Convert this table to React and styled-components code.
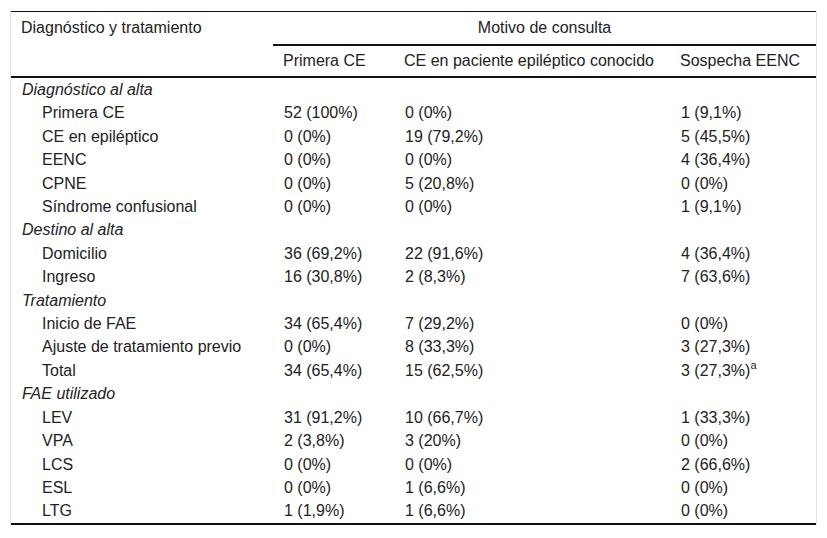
import React from 'react';
import styled, { createGlobalStyle } from 'styled-components';

const GlobalStyle = createGlobalStyle`
  html, body {
    margin: 0;
    padding: 0;
    background: #fff;
  }
`;

const Page = styled.div`
  padding: 11px 0 0 10px;
  font-family: "Liberation Sans", Arial, sans-serif;
  font-size: 16px;
  color: #222;
`;

const Frame = styled.div`
  width: 805px;
  border-left: 1px solid #e2e2e2;
  border-right: 1px solid #e2e2e2;
`;

const Table = styled.table`
  width: 805px;
  border-collapse: collapse;
  table-layout: fixed;
  border-top: 1px solid #111;
  border-bottom: 2px solid #111;
`;

const HeadCell = styled.th`
  font-weight: normal;
  text-align: ${(p) => (p.$center ? 'center' : 'left')};
  vertical-align: top;
  padding: 0 10px;
  height: ${(p) => p.$h}px;
  line-height: ${(p) => p.$lh}px;
  border-bottom: ${(p) => (p.$line ? '2px solid #111' : 'none')};
  white-space: nowrap;
`;

const Cell = styled.td`
  padding: 0 10px 0 ${(p) => (p.$indent ? 31 : 11)}px;
  height: 23.4px;
  line-height: 23.4px;
  font-style: ${(p) => (p.$italic ? 'italic' : 'normal')};
  white-space: nowrap;
  vertical-align: top;
`;

const Sup = styled.sup`
  font-size: 11px;
  line-height: 0;
  vertical-align: 7px;
`;

const groups = [
  {
    title: 'Diagnóstico al alta',
    rows: [
      ['Primera CE', '52 (100%)', '0 (0%)', '1 (9,1%)'],
      ['CE en epiléptico', '0 (0%)', '19 (79,2%)', '5 (45,5%)'],
      ['EENC', '0 (0%)', '0 (0%)', '4 (36,4%)'],
      ['CPNE', '0 (0%)', '5 (20,8%)', '0 (0%)'],
      ['Síndrome confusional', '0 (0%)', '0 (0%)', '1 (9,1%)'],
    ],
  },
  {
    title: 'Destino al alta',
    rows: [
      ['Domicilio', '36 (69,2%)', '22 (91,6%)', '4 (36,4%)'],
      ['Ingreso', '16 (30,8%)', '2 (8,3%)', '7 (63,6%)'],
    ],
  },
  {
    title: 'Tratamiento',
    rows: [
      ['Inicio de FAE', '34 (65,4%)', '7 (29,2%)', '0 (0%)'],
      ['Ajuste de tratamiento previo', '0 (0%)', '8 (33,3%)', '3 (27,3%)'],
      ['Total', '34 (65,4%)', '15 (62,5%)', '3 (27,3%)', 'a'],
    ],
  },
  {
    title: 'FAE utilizado',
    rows: [
      ['LEV', '31 (91,2%)', '10 (66,7%)', '1 (33,3%)'],
      ['VPA', '2 (3,8%)', '3 (20%)', '0 (0%)'],
      ['LCS', '0 (0%)', '0 (0%)', '2 (66,6%)'],
      ['ESL', '0 (0%)', '1 (6,6%)', '0 (0%)'],
      ['LTG', '1 (1,9%)', '1 (6,6%)', '0 (0%)'],
    ],
  },
];

export default function App() {
  return (
    <>
      <GlobalStyle />
      <Page>
        <Frame>
          <Table>
            <colgroup>
              <col style={{ width: 262 }} />
              <col style={{ width: 121 }} />
              <col style={{ width: 276 }} />
              <col style={{ width: 146 }} />
            </colgroup>
            <thead>
              <tr>
                <HeadCell rowSpan={2} $line $h={32} $lh={32}>
                  Diagnóstico y tratamiento
                </HeadCell>
                <HeadCell colSpan={3} $center $line $h={32} $lh={32}>
                  Motivo de consulta
                </HeadCell>
              </tr>
              <tr>
                <HeadCell $line $h={30} $lh={30}>Primera CE</HeadCell>
                <HeadCell $line $h={30} $lh={30}>CE en paciente epiléptico conocido</HeadCell>
                <HeadCell $line $h={30} $lh={30}>Sospecha EENC</HeadCell>
              </tr>
            </thead>
            <tbody>
              {groups.map((g) => (
                <React.Fragment key={g.title}>
                  <tr>
                    <Cell $italic colSpan={4}>{g.title}</Cell>
                  </tr>
                  {g.rows.map((r) => (
                    <tr key={r[0]}>
                      <Cell $indent>{r[0]}</Cell>
                      <Cell>{r[1]}</Cell>
                      <Cell>{r[2]}</Cell>
                      <Cell>
                        {r[3]}
                        {r[4] && <Sup>{r[4]}</Sup>}
                      </Cell>
                    </tr>
                  ))}
                </React.Fragment>
              ))}
            </tbody>
          </Table>
        </Frame>
      </Page>
    </>
  );
}
